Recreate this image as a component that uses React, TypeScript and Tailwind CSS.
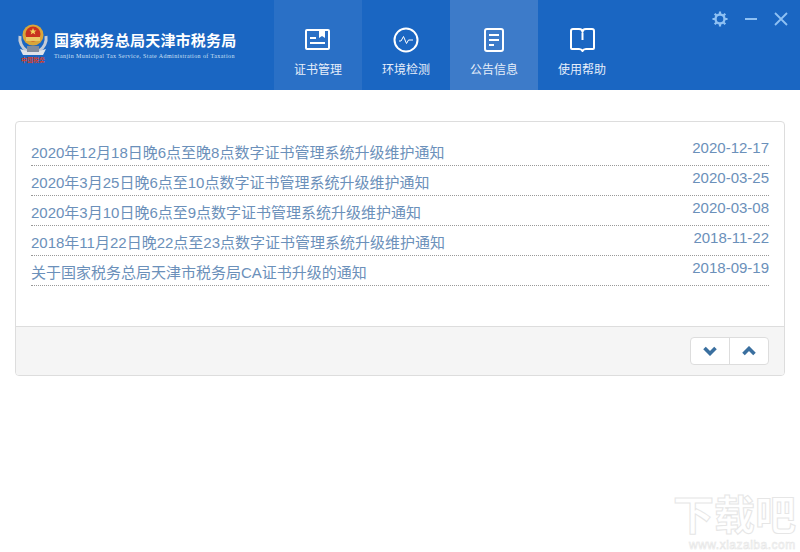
const cjk = "font-['Liberation_Sans','Noto_Sans_CJK_SC',sans-serif]";

const rows = [
  ["2020年12月18日晚6点至晚8点数字证书管理系统升级维护通知", "2020-12-17"],
  ["2020年3月25日晚6点至10点数字证书管理系统升级维护通知", "2020-03-25"],
  ["2020年3月10日晚6点至9点数字证书管理系统升级维护通知", "2020-03-08"],
  ["2018年11月22日晚22点至23点数字证书管理系统升级维护通知", "2018-11-22"],
  ["关于国家税务总局天津市税务局CA证书升级的通知", "2018-09-19"],
];

function IconCert() {
  return (
    <svg width="26" height="22" viewBox="0 0 26 22" fill="none" stroke="#fff" strokeWidth="2">
      <rect x="1" y="1" width="23" height="19" rx="1" />
      <path d="M5 9h6M5 14h15" />
      <path d="M14 1h6v8l-3-2-3 2z" fill="#fff" stroke="none" />
    </svg>
  );
}
function IconPulse() {
  return (
    <svg width="26" height="26" viewBox="0 0 26 26" fill="none" stroke="#fff">
      <circle cx="13" cy="13" r="11.500" strokeWidth="2" />
      <path d="M6 14h2l2.500-4.500 3 7 2-3.500h4.500" strokeWidth="1" />
    </svg>
  );
}
function IconDoc() {
  return (
    <svg width="20" height="24" viewBox="0 0 20 24" fill="none" stroke="#fff" strokeWidth="2">
      <rect x="1" y="1" width="18" height="22" rx="2" />
      <path d="M5 7h10M5 12h10M5 17h5" />
    </svg>
  );
}
function IconBook() {
  return (
    <svg width="25" height="24" viewBox="0 0 25 24" fill="none" stroke="#fff" strokeWidth="2">
      <path d="M1 3c0-1 1-2 2-2h6c2 0 3.500 1 3.500 3 0-2 1.500-3 3.500-3h6c1 0 2 1 2 2v17c0 .5-.5 1-1 1h-7c-2 0-3 1-3.500 2-.5-1-1.500-2-3.500-2H2c-.5 0-1-.5-1-1z" strokeLinejoin="round" />
      <path d="M12.500 5v7" />
    </svg>
  );
}

function Logo() {
  return (
    <svg width="32" height="40" viewBox="0 0 32 40">
      <path d="M3 12c-1 6 2 12 7 15h12c5-3 8-9 7-15" fill="none" stroke="#c4cbd6" strokeWidth="3" />
      <circle cx="16" cy="11" r="10.500" fill="#d9a63a" />
      <circle cx="16" cy="10" r="7.500" fill="#c9311f" />
      <path d="M9 13h14v4H9z" fill="#ecc765" />
      <path d="M16 4l1 2.500h2.500l-2 1.600.8 2.500-2.300-1.500-2.300 1.500.8-2.500-2-1.600H15z" fill="#f3d25d" />
      <path d="M3 25l7 2h12l7-2-3 6H6z" fill="#dfe3ea" />
      <path d="M10 22h12v6H10z" fill="#7f8b9d" />
      <text x="16" y="38" textAnchor="middle" fontSize="6" fill="#d4402c" fontWeight="700">中国税务</text>
    </svg>
  );
}

function Nav({ label, icon, cls }: { label: string; icon: React.ReactNode; cls: string }) {
  return (
    <div className={`w-[88px] h-full flex flex-col items-center pt-[27px] ${cls}`}>
      <div className="h-[26px] flex items-center justify-center">{icon}</div>
      <div className="mt-[9px] text-[12px] leading-[16px] text-[#e6eefa]">{label}</div>
    </div>
  );
}

export default function App() {
  return (
    <div className={`relative w-[800px] h-[552px] bg-white overflow-hidden ${cjk}`}>
      <header className="h-[90px] bg-[#1a66c2] flex">
        <div className="w-[274px] flex items-start pt-[24px] pl-[17px]">
          <Logo />
          <div className="ml-[5px]">
            <div className="text-[15px] leading-[20px] font-bold tracking-[0.2px] text-white whitespace-nowrap mt-[7px]">国家税务总局天津市税务局</div>
            <div className="text-[6px] leading-[8px] mt-[1px] tracking-[0.42px] text-[#cfe0f5] whitespace-nowrap font-['Liberation_Serif',serif]">Tianjin Municipal Tax Service, State Administration of Taxation</div>
          </div>
        </div>
        <Nav label="证书管理" icon={<IconCert />} cls="bg-[#2a70c6]" />
        <Nav label="环境检测" icon={<IconPulse />} cls="" />
        <Nav label="公告信息" icon={<IconDoc />} cls="bg-[#3d7bc9]" />
        <Nav label="使用帮助" icon={<IconBook />} cls="" />
        <div className="flex-1 flex items-start justify-end pt-[11px] pr-[12px] gap-[16px]">
          <svg width="16" height="16" viewBox="0 0 16 16" fill="none" stroke="#8fc1f3" strokeWidth="2.400">
            <circle cx="8" cy="8" r="4.500" />
            <path d="M8 0.500v2.500M8 13v2.500M0.500 8H3M13 8h2.500M2.700 2.700l1.800 1.800M11.500 11.500l1.800 1.800M13.300 2.700l-1.800 1.800M4.500 11.500l-1.800 1.800" strokeWidth="2.200" />
          </svg>
          <svg width="14" height="16" viewBox="0 0 14 16" stroke="#8fc1f3" strokeWidth="2">
            <path d="M1 8h12" />
          </svg>
          <svg width="14" height="16" viewBox="0 0 14 16" stroke="#8fc1f3" strokeWidth="1.800" fill="none">
            <path d="M1 2l12 12M13 2L1 14" />
          </svg>
        </div>
      </header>

      <main className="px-[15px] pt-[31px]">
        <section className="h-[255px] rounded-[4px] border border-[#dddddd] flex flex-col overflow-hidden">
          <div className="flex-1 px-[15px] pt-[14px]">
            {rows.map(([t, d]) => (
              <div key={d} className="h-[30px] flex justify-between border-b border-dotted border-[#999999] text-[15px] text-[#6b90ba]">
                <span className="leading-[16px] pt-[9px] h-[29px]">{t}</span>
                <span className="leading-[16px] pt-[4px]">{d}</span>
              </div>
            ))}
          </div>
          <div className="h-[49px] bg-[#f5f5f5] border-t border-[#dddddd] flex justify-end items-start pt-[10px] pr-[15px]">
            <div className="flex h-[28px] w-[79px] bg-white rounded-[4px] border border-[#dddddd]">
              <div className="w-[39px] border-r border-[#dddddd] flex items-center justify-center">
                <svg width="14" height="10" viewBox="0 0 14 10" fill="none" stroke="#3a6f9f" strokeWidth="3.600"><path d="M1.500 2l5.500 5.500L12.500 2" /></svg>
              </div>
              <div className="flex-1 flex items-center justify-center">
                <svg width="14" height="10" viewBox="0 0 14 10" fill="none" stroke="#3a6f9f" strokeWidth="3.600"><path d="M1.500 8L7 2.500 12.500 8" /></svg>
              </div>
            </div>
          </div>
        </section>
      </main>

      <div className="absolute left-[673px] top-[496px] w-[127px] h-[56px] select-none">
        <div className="text-[41px] leading-[40px] h-[40px] font-bold whitespace-nowrap text-transparent [-webkit-text-stroke:1px_#e6e6e6]">下载吧</div>
        <div className="mt-[2px] ml-[16px] text-[12px] leading-[14px] h-[14px] tracking-[0.5px] text-transparent [-webkit-text-stroke:0.6px_#e6e6e6] whitespace-nowrap">www.xiazaiba.com</div>
      </div>
    </div>
  );
}
